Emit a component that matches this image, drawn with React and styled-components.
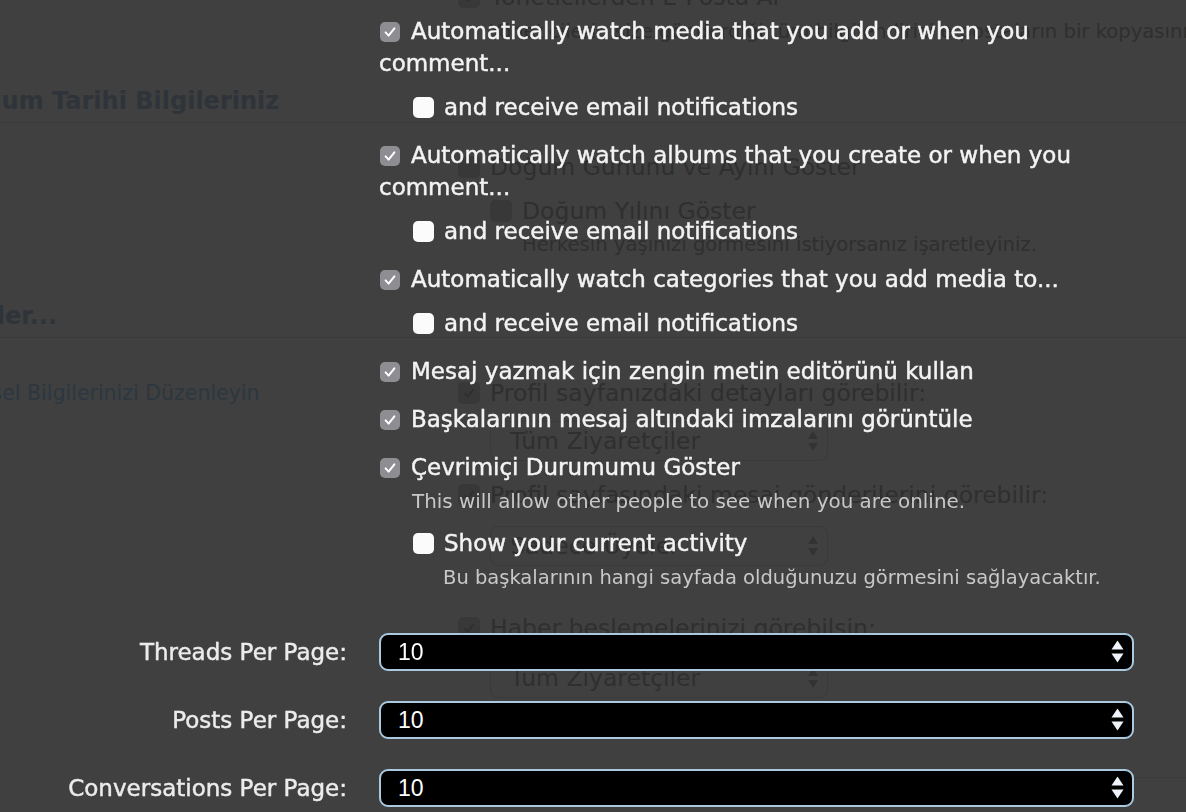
import React from 'react'
import styled, { createGlobalStyle } from 'styled-components'

const FONT = `"DejaVu Sans", "Noto Sans", sans-serif`

const GlobalStyle = createGlobalStyle`
  html, body {
    margin: 0;
    padding: 0;
    background: #404040;
    overflow: hidden;
  }
  body {
    font-family: ${FONT};
  }
`

/* ---------- faded page behind the overlay ---------- */

const Backdrop = styled.div`
  width: 1186px;
  height: 812px;
  overflow: hidden;
  color: #2f2f2f;
  font-family: ${FONT};
`

const GhostPage = styled.div`
  margin: -19px 0 0 -52px;
`

const GhostHeading = styled.h2`
  margin: ${p => p.$top}px 0 0;
  padding-bottom: 3px;
  font-size: 24px;
  line-height: 36px;
  font-weight: bold;
  color: #2e3439;
  text-indent: ${p => p.$shift || 0}px;
  border-bottom: 1px solid #3a3a3a;
  white-space: nowrap;
`

const GhostRow = styled.div`
  margin-top: ${p => p.$top || 0}px;
  padding-left: ${p => p.$indent}px;
  font-size: ${p => p.$small ? 19.6 : 23.5}px;
  line-height: ${p => p.$small ? 24 : 32}px;
  white-space: nowrap;
  display: flex;
  align-items: center;
`

const GhostBox = styled.span`
  width: 22px;
  height: 22px;
  border-radius: 5px;
  background: #383838;
  margin-right: 10px;
  flex: none;
  display: flex;
  align-items: center;
  justify-content: center;
`

const GhostSplit = styled.div`
  display: grid;
  grid-template-columns: 510px 1fr;
  margin-top: ${p => p.$top}px;
`

const GhostLink = styled.div`
  padding-left: 8px;
  font-size: 20.5px;
  line-height: 32px;
  color: #2c3740;
  white-space: nowrap;
`

const GhostSelect = styled.div`
  margin: ${p => p.$top}px 0 0 32px;
  width: 338px;
  height: 40px;
  box-sizing: border-box;
  border: 1px solid #3a3a3a;
  border-radius: 8px;
  display: flex;
  align-items: center;
  justify-content: space-between;
  padding: 0 8px 0 19px;
  font-size: 23.5px;
  color: #2f2f2f;
`

const GhostRule = styled.div`
  margin-top: ${p => p.$top}px;
  border-top: 1px solid #3b3b3b;
`

/* ---------- overlay form ---------- */

const Overlay = styled.div`
  position: fixed;
  inset: 0;
  font-family: ${FONT};
  color: #f3f3f3;
`

const Form = styled.div`
  padding-top: 15px;
  display: flex;
  flex-direction: column;
`

const Checks = styled.div`
  margin-left: 379px;
  width: 755px;
`

const CheckGroup = styled.div`
  margin-bottom: 16px;
`

const CheckLine = styled.label`
  display: block;
  font-size: 23px;
  line-height: 32px;
  -webkit-text-stroke: 0.45px #f3f3f3;
`

const Box = styled.span`
  display: inline-flex;
  align-items: center;
  justify-content: center;
  box-sizing: border-box;
  width: ${p => p.$checked ? 20 : 21}px;
  height: ${p => p.$checked ? 20 : 21}px;
  border-radius: 5px;
  background: ${p => p.$checked ? '#8e8e92' : '#fbfbfb'};
  margin: 0 ${p => p.$checked ? 11 : 10}px 0 1px;
  vertical-align: ${p => p.$checked ? 0 : -3}px;
  -webkit-text-stroke: 0;
`

const SubList = styled.div`
  margin-top: ${p => p.$top}px;
  padding-left: 33px;
`

const Hint = styled.div`
  margin-top: 7px;
  padding-left: ${p => p.$indent}px;
  font-size: ${p => p.$size}px;
  line-height: 24px;
  color: #c8c8c8;
`

const FieldRow = styled.div`
  display: grid;
  grid-template-columns: 347px 755px;
  column-gap: 32px;
  align-items: center;
  margin-top: ${p => p.$top}px;
`

const FieldLabel = styled.div`
  text-align: right;
  font-size: 23px;
  color: #ececec;
  -webkit-text-stroke: 0.45px #ececec;
`

const SelectBox = styled.div`
  position: relative;
  height: 38px;
  box-sizing: border-box;
  border: 2px solid #a9c9e1;
  border-radius: 9px;
  background: #000;
  color: #fff;
  font-family: "Liberation Sans", Arial, sans-serif;
  font-size: 23px;
  display: flex;
  align-items: center;
  padding-left: 17px;
`

const Arrows = styled.svg`
  position: absolute;
  right: 8px;
  top: 50%;
  transform: translateY(-50%);
`

const Check = () => (
  <svg width="14" height="14" viewBox="0 0 14 14">
    <path d="M2.6 7.4 L5.6 10.6 L11.4 3.4" fill="none" stroke="#fff" strokeWidth="2" strokeLinecap="round" strokeLinejoin="round" />
  </svg>
)

const CheckItem = ({ checked, children }) => (
  <CheckLine>
    <Box $checked={checked}>{checked && <Check />}</Box>
    {children}
  </CheckLine>
)

const Select = ({ value }) => (
  <SelectBox>
    {value}
    <Arrows width="13" height="23" viewBox="0 0 13 23">
      <path d="M6.5 0 L12.5 9 L0.5 9 Z" fill="#eef4fa" />
      <path d="M0.5 13 L12.5 13 L6.5 22 Z" fill="#eef4fa" />
    </Arrows>
  </SelectBox>
)

const GhostArrows = () => (
  <svg width="12" height="22" viewBox="0 0 12 22">
    <path d="M6 1 L11 9 L1 9 Z" fill="#333" />
    <path d="M1 13 L11 13 L6 21 Z" fill="#333" />
  </svg>
)

const GhostCheck = () => (
  <svg width="14" height="14" viewBox="0 0 14 14">
    <path d="M2.6 7.4 L5.6 10.6 L11.4 3.4" fill="none" stroke="#2f2f2f" strokeWidth="2" />
  </svg>
)

const App = () => (
  <>
    <GlobalStyle />
    <Backdrop>
      <GhostPage>
        <GhostRow $indent={510}>
          <GhostBox><GhostCheck /></GhostBox>Yöneticilerden E-Posta Al
        </GhostRow>
        <GhostRow $indent={542} $small $top={7}>
          Yöneticilerin size gönderdiği tüm bilgilendirici  e-postaların bir kopyasını alın
        </GhostRow>
        <GhostHeading $top={39}>Doğum Tarihi Bilgileriniz</GhostHeading>
        <GhostRow $indent={510} $top={28}>
          <GhostBox />Doğum Gününü ve Ayını Göster
        </GhostRow>
        <GhostRow $indent={542} $top={12}>
          <GhostBox />Doğum Yılını Göster
        </GhostRow>
        <GhostRow $indent={574} $small $top={6}>
          Herkesin yaşınızı görmesini istiyorsanız işaretleyiniz.
        </GhostRow>
        <GhostHeading $top={41} $shift={-32}>Tercihler...</GhostHeading>
        <GhostSplit $top={39}>
          <GhostLink>Kişisel Bilgilerinizi Düzenleyin</GhostLink>
          <div>
            <GhostRow $indent={0}>
              <GhostBox><GhostCheck /></GhostBox>Profil sayfanızdaki detayları görebilir:
            </GhostRow>
            <GhostSelect $top={12}>Tüm Ziyaretçiler<GhostArrows /></GhostSelect>
            <GhostRow $indent={0} $top={18}>
              <GhostBox><GhostCheck /></GhostBox>Profil sayfasındaki mesaj gönderilerini görebilir:
            </GhostRow>
            <GhostSelect $top={15}>Sadece Üyeler<GhostArrows /></GhostSelect>
            <GhostRow $indent={0} $top={46}>
              <GhostBox><GhostCheck /></GhostBox>Haber beslemelerinizi görebilsin:
            </GhostRow>
            <GhostSelect $top={14}>Tüm Ziyaretçiler<GhostArrows /></GhostSelect>
            <GhostRule $top={79} />
          </div>
        </GhostSplit>
      </GhostPage>
    </Backdrop>

    <Overlay>
      <Form>
        <Checks>
          <CheckGroup>
            <CheckItem checked>Automatically watch media that you add or when you comment...</CheckItem>
            <SubList $top={12}>
              <CheckItem>and receive email notifications</CheckItem>
            </SubList>
          </CheckGroup>
          <CheckGroup>
            <CheckItem checked>Automatically watch albums that you create or when you comment...</CheckItem>
            <SubList $top={12}>
              <CheckItem>and receive email notifications</CheckItem>
            </SubList>
          </CheckGroup>
          <CheckGroup>
            <CheckItem checked>Automatically watch categories that you add media to...</CheckItem>
            <SubList $top={12}>
              <CheckItem>and receive email notifications</CheckItem>
            </SubList>
          </CheckGroup>
          <CheckGroup>
            <CheckItem checked>Mesaj yazmak için zengin metin editörünü kullan</CheckItem>
          </CheckGroup>
          <CheckGroup>
            <CheckItem checked>Başkalarının mesaj altındaki imzalarını görüntüle</CheckItem>
          </CheckGroup>
          <div>
            <CheckItem checked>Çevrimiçi Durumumu Göster</CheckItem>
            <Hint $indent={33} $size={19.9}>This will allow other people to see when you are online.</Hint>
            <SubList $top={13}>
              <CheckItem>Show your current activity</CheckItem>
              <Hint $indent={31} $size={19.5}>Bu başkalarının hangi sayfada olduğunuzu görmesini sağlayacaktır.</Hint>
            </SubList>
          </div>
        </Checks>

        <FieldRow $top={43}>
          <FieldLabel>Threads Per Page:</FieldLabel>
          <Select value="10" />
        </FieldRow>
        <FieldRow $top={30}>
          <FieldLabel>Posts Per Page:</FieldLabel>
          <Select value="10" />
        </FieldRow>
        <FieldRow $top={30}>
          <FieldLabel>Conversations Per Page:</FieldLabel>
          <Select value="10" />
        </FieldRow>
      </Form>
    </Overlay>
  </>
)

export default App
